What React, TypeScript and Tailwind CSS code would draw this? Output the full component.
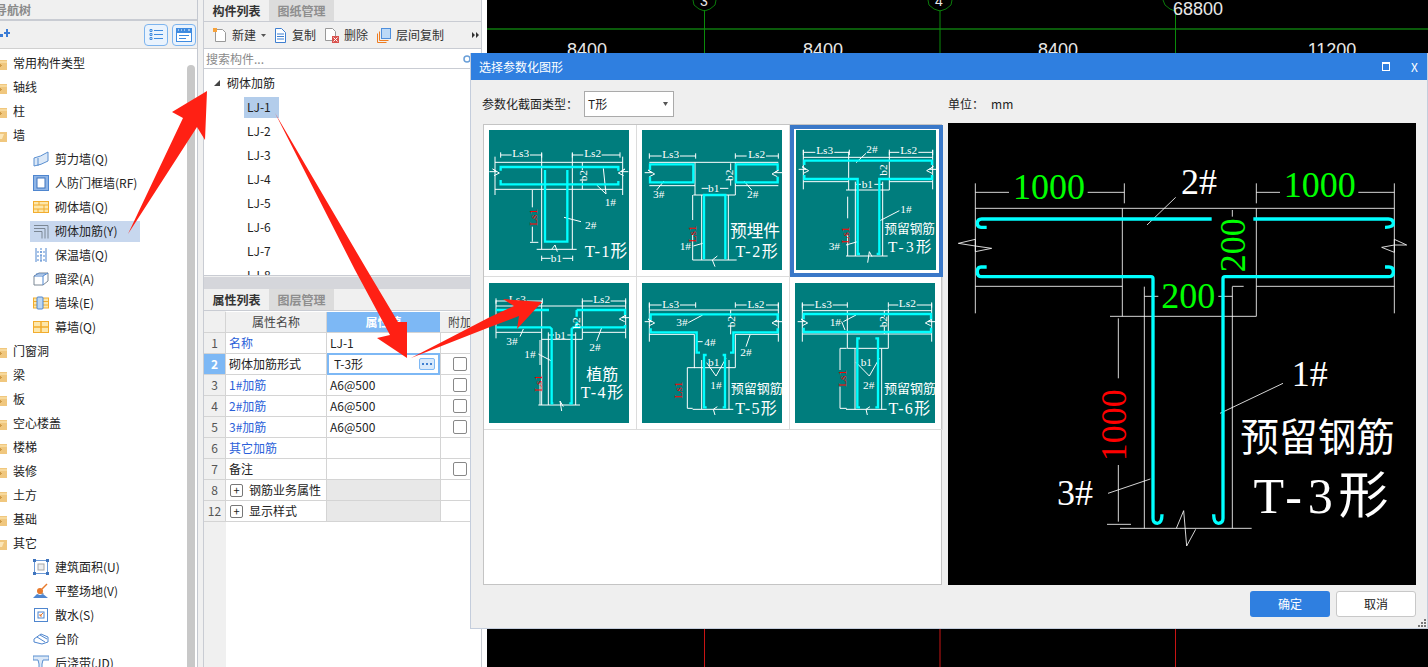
import type { ReactNode } from 'react'

const cad = { fontFamily: '"Liberation Serif", "Noto Sans CJK SC", serif' }

type Label = { t: string; x: number; y: number; s?: number; w?: number; rot?: boolean; red?: boolean; green?: boolean }

const Drawing = ({ vb, white, cyan, labels, thin = 3, bar = 7 }: { vb: string; white: string; cyan: string; labels: Label[]; thin?: number; bar?: number }) => (
  <svg viewBox={vb} className="w-full h-full block">
    <path d={white} fill="none" stroke="#fff" strokeWidth={thin} />
    <path d={cyan} fill="none" stroke="#00ffff" strokeWidth={bar} />
    {labels.map(l => (
      <text
        key={l.t + l.x}
        x={l.rot ? 0 : l.x}
        y={l.rot ? 0 : l.y}
        transform={l.rot ? `translate(${l.x} ${l.y}) rotate(-90)` : undefined}
        fontSize={l.s ?? 34}
        textAnchor="middle"
        textLength={l.w}
        lengthAdjust={l.w ? 'spacing' : undefined}
        fill={l.red ? '#ff0000' : l.green ? '#00ff00' : '#ffffff'}
        style={cad}
      >
        {l.t}
      </text>
    ))}
  </svg>
)

const breakL = (x: number, y: number) => `M${x} ${y}h22l-12 -8l20 12l-16 8 `
const breakR = (x: number, y: number) => `M${x} ${y}h-22l12 -8l-20 12l16 8 `

const thumbs = [
  {
    vb: '27 30 420 420',
    white: `M62 105H95M150 105H185M62 97V113M185 97V113M277 105H310M365 105H420M277 97V113M420 97V113M45 127H428M45 208H428M45 110V225M428 110V225M185 100V388M277 100V388M170 388H290M157 210V262M157 320V365M150 367H175M185 415H212M248 415H278M185 407V423M278 407V423M252 292L303 305M350 195L378 222M370 145L378 222M307 127V150M307 182V208M215 388L225 375L232 395${breakL(28, 155)}${breakR(445, 155)}`,
    cyan: 'M62 152V141H415V152M62 180V193H415V183M195 150V365H262V150',
    labels: [
      { t: 'Ls3', x: 122, y: 110 },
      { t: 'Ls2', x: 338, y: 110 },
      { t: 'b2', x: 320, y: 167, rot: true },
      { t: 'Ls1', x: 172, y: 292, rot: true, red: true },
      { t: 'b1', x: 229, y: 426 },
      { t: '1#', x: 391, y: 257 },
      { t: '2#', x: 332, y: 326 },
      { t: 'T-1形', x: 378, y: 412, s: 50, w: 127 },
    ],
  },
  {
    vb: '486 30 420 420',
    white: `M508 108H545M600 108H647M508 100V116M647 100V116M766 108H800M858 108H895M766 100V116M895 100V116M508 127H895M508 197H645M766 197H895M645 127V225M766 127V225M640 225H766M665 225V420M745 225V420M638 420H770M665 205H685M720 205H745M638 225V300M638 345V420M552 183L530 210M792 183L815 210M640 378L668 370M752 130V150M752 180V197M705 440L697 420L712 408${breakL(494, 158)}${breakR(906, 158)}`,
    cyan: 'M510 150V133H640V187H510V170M893 150V133H768V187H893V170M672 418V225H736V418',
    labels: [
      { t: 'Ls3', x: 572, y: 113 },
      { t: 'Ls2', x: 830, y: 113 },
      { t: 'b2', x: 760, y: 166, rot: true },
      { t: 'b1', x: 701, y: 216 },
      { t: 'Ls1', x: 648, y: 342, rot: true, red: true },
      { t: '3#', x: 536, y: 233 },
      { t: '2#', x: 818, y: 233 },
      { t: '1#', x: 616, y: 390 },
      { t: '预埋件', x: 825, y: 352, s: 50 },
      { t: 'T-2形', x: 830, y: 412, s: 48, w: 127 },
    ],
  },
  {
    vb: '30 30 420 420',
    white: `M52 97H88M145 97H190M52 89V105M190 89V105M310 97H340M397 97H440M310 89V105M440 89V105M52 112H440M52 185H188M310 185H440M52 90V208M440 90V208M188 95V210M310 95V210M180 210H310M208 185V408M290 185V408M180 408H305M185 230V295M185 345V408M210 128L240 100M280 303L340 272M180 375L215 365M245 428L250 395L258 410M210 193H225M265 193H290${breakL(38, 148)}${breakR(452, 148)}`,
    cyan: 'M55 135V122H438V135M55 165V177H215V402H222M438 165V177H280V402H272',
    labels: [
      { t: 'Ls3', x: 116, y: 103 },
      { t: 'Ls2', x: 368, y: 103 },
      { t: '2#', x: 258, y: 98 },
      { t: 'b2', x: 302, y: 150, rot: true },
      { t: 'b1', x: 244, y: 205 },
      { t: 'Ls1', x: 190, y: 345, rot: true, red: true },
      { t: '1#', x: 360, y: 278 },
      { t: '3#', x: 145, y: 389 },
      { t: '预留钢筋', x: 371, y: 340, s: 38 },
      { t: 'T-3形', x: 371, y: 395, s: 46, w: 130 },
    ],
  },
  {
    vb: '27 24 420 420',
    white: `M48 78H85M140 78H187M48 70V86M187 70V86M307 78H338M392 78H437M307 70V86M437 70V86M48 93H437M48 172H185M307 172H437M48 76V190M437 76V190M185 78V390M307 78V193M185 193H307M205 172V390M287 172V390M175 390H300M180 195V270M180 325V390M175 237L215 258M130 162L120 185M365 158L350 198M245 408L240 378L250 395M205 180H222M262 180H287${breakR(448, 128)}`,
    cyan: 'M48 105H207M290 105H435V120M48 157H210L215 162V385H220M435 150V157H280L275 162V385H268M290 105V125M290 157V140',
    labels: [
      { t: 'Ls3', x: 112, y: 84 },
      { t: 'Ls2', x: 365, y: 84 },
      { t: 'b2', x: 300, y: 144, rot: true },
      { t: 'b1', x: 241, y: 191 },
      { t: '3#', x: 96, y: 209 },
      { t: '2#', x: 345, y: 229 },
      { t: '1#', x: 150, y: 248 },
      { t: 'Ls1', x: 187, y: 325, rot: true, red: true },
      { t: '植筋', x: 367, y: 315, s: 48 },
      { t: 'T-4形', x: 366, y: 368, s: 48, w: 127 },
    ],
  },
  {
    vb: '486 24 420 420',
    white: `M508 90H545M600 90H647M508 82V98M647 82V98M766 90H800M858 90H895M766 82V98M895 82V98M508 105H895M508 178H643M766 178H895M508 85V200M895 85V200M643 178V278M766 178V278M643 278H766M665 255V403M747 255V403M638 403H760M622 278H645M622 400H638M622 278V400M625 143L668 120M652 200H668M810 180L798 215M680 263L708 303L738 250M705 420L700 403L712 395M752 105V125M752 152V178${breakL(494, 140)}${breakR(906, 140)}`,
    cyan: 'M512 135V118H893V135M512 160V172H650V233H660M893 160V172H760V233H750M680 240H672V397H680M728 240H735V397H728',
    labels: [
      { t: 'Ls3', x: 572, y: 98 },
      { t: 'Ls2', x: 828, y: 98 },
      { t: '3#', x: 606, y: 152 },
      { t: 'b2', x: 764, y: 140, rot: true },
      { t: '4#', x: 690, y: 214 },
      { t: '2#', x: 798, y: 242 },
      { t: 'b1', x: 701, y: 273 },
      { t: '1#', x: 708, y: 341 },
      { t: 'Ls1', x: 605, y: 345, rot: true, red: true },
      { t: '预留钢筋', x: 830, y: 354, s: 39 },
      { t: 'T-5形', x: 828, y: 416, s: 48, w: 125 },
    ],
  },
  {
    vb: '945 24 420 420',
    white: `M967 90H1003M1058 90H1102M967 82V98M1102 82V98M1225 90H1255M1310 90H1355M1225 82V98M1355 82V98M967 107H1355M967 177H1355M967 85V200M1355 85V200M1102 107V220M1225 100V220M1102 220H1225M1125 220V403M1205 220V403M1098 403H1220M1080 220H1100M1080 400H1100M1080 220V285M1080 335V400M1090 140L1128 120M1085 140L1095 165M1128 262L1168 303L1198 250M1162 420L1158 403L1170 395M1213 125V107M1213 155V177${breakL(953, 140)}${breakR(1366, 140)}`,
    cyan: 'M971 133V117H1353V133M971 158V171H1353V158M1140 190H1132V397H1140M1186 190H1194V397H1186',
    labels: [
      { t: 'Ls3', x: 1030, y: 98 },
      { t: 'Ls2', x: 1282, y: 96 },
      { t: '1#', x: 1066, y: 152 },
      { t: 'b2', x: 1222, y: 140, rot: true },
      { t: 'b1', x: 1159, y: 273 },
      { t: '2#', x: 1166, y: 341 },
      { t: 'Ls1', x: 1097, y: 310, rot: true, red: true },
      { t: '预留钢筋', x: 1290, y: 354, s: 39 },
      { t: 'T-6形', x: 1288, y: 416, s: 48, w: 125 },
    ],
  },
]

const bigWhite = `M91 265H1348M91 190V580M1348 190V580M538 190V250M934 190V250M91 217H192M428 217H538M934 217H1005M1240 217H1348M91 499H532M934 499H1348M532 265V589M934 265V589M495 589H934M598 500V1225M862 500V1225M525 1225H920M598 529H640M820 529H862M606 315L692 232M825 880L1014 790M489 1120L616 1077M520 595V775M520 1035V1205M486 1213H558M862 499H896M862 270V290M694 1225L716 1172L725 1278L752 1228M40 370L91 358V395L140 385L91 378L40 370M1385 375L1348 358V397L1310 382L1348 375H1385`
const bigCyan = 'M125 322H108Q97 322 97 310Q97 297 110 297H800M925 297H1330Q1345 297 1345 310Q1345 322 1320 322M125 441H108Q97 441 97 455Q97 470 110 470H618Q624 470 624 476V1195Q624 1210 637 1210Q651 1210 651 1183M1320 441H1332Q1345 441 1345 455Q1345 470 1330 470H840Q834 470 834 476V1195Q834 1210 820 1210Q806 1210 806 1183'
const bigLabels: Label[] = [
  { t: '1000', x: 312, y: 238, s: 108, green: true },
  { t: '1000', x: 1124, y: 232, s: 108, green: true },
  { t: '200', x: 730, y: 565, s: 108, green: true },
  { t: '200', x: 900, y: 376, s: 108, green: true, rot: true },
  { t: '1000', x: 543, y: 916, s: 108, red: true, rot: true },
  { t: '2#', x: 762, y: 222, s: 108 },
  { t: '1#', x: 1094, y: 797, s: 108 },
  { t: '3#', x: 390, y: 1155, s: 108 },
  { t: '预留钢筋', x: 1118, y: 992, s: 116 },
  { t: 'T-3形', x: 1128, y: 1180, s: 150, w: 405 },
]

const Folder = ({ open }: { open?: boolean }) => (
  <svg width="14" height="13" viewBox="0 0 14 13" className="shrink-0 -ml-[7px]">
    <path d="M0 1h5l2 2h7v10H0z" fill="#f0c77e" />
    <path d={open ? 'M0 5h11l-2 5H0z' : 'M0 4h14v2H0z'} fill={open ? '#fbe6b8' : '#f7d99c'} />
    {!open && <path d="M6 7h2v1h1v1H8v1H6z" fill="#cf9a45" />}
  </svg>
)

const Ico = ({ children }: { children: ReactNode }) => (
  <svg width="16" height="16" viewBox="0 0 16 16" className="shrink-0">
    {children}
  </svg>
)

const icons: Record<string, ReactNode> = {
  shear: <Ico><path d="M1 7q6-1 14-6v9q-7 4-14 5z" fill="#dbe8f7" stroke="#5a8fd0" /><path d="M5 7v8" stroke="#5a8fd0" /></Ico>,
  rf: <Ico><rect x="0.5" y="0.5" width="15" height="15" fill="#8fb5e6" stroke="#4f86cf" /><rect x="4" y="3" width="8" height="10" fill="#fff" stroke="#3f74bd" /></Ico>,
  brick: <Ico><rect x="0.5" y="2.5" width="15" height="11" fill="#fde7ab" stroke="#f2ad2e" /><path d="M1 6h14M1 10h14M6 3v3M11 6v4M5 10v3M11 10v3" stroke="#f2ad2e" /></Ico>,
  rebar: <Ico><path d="M1 2.5h14v13M1 5.5h11v10M1 8.5h8v7" fill="none" stroke="#7b8794" /></Ico>,
  insul: <Ico><path d="M3 1v14M13 1v14" stroke="#4f86cf" /><path d="M8 1v14M4 5h8M4 9h8M4 13h8" stroke="#4f86cf" strokeDasharray="2 1" /></Ico>,
  beam: <Ico><path d="M1 5l5-3h9v8l-5 4H1z" fill="#fff" stroke="#7b8794" /><path d="M1 5h9v9M10 5l5-3" fill="none" stroke="#4f86cf" /><path d="M3 3h10" stroke="#4f86cf" /></Ico>,
  pier: <Ico><rect x="0.5" y="3" width="15" height="10" fill="#fde7ab" stroke="#f2ad2e" /><path d="M1 6.5h14M1 10h14" stroke="#f2ad2e" /><rect x="4" y="2" width="6" height="12" rx="1" fill="#bcd6f2" stroke="#4f86cf" /></Ico>,
  curtain: <Ico><rect x="0.5" y="2.5" width="15" height="11" fill="#fde7ab" stroke="#f2ad2e" /><path d="M8 3v10M1 8h14" stroke="#f2ad2e" strokeWidth="1.5" /></Ico>,
  area: <Ico><rect x="1.5" y="1.5" width="13" height="13" fill="#fff" stroke="#6d9ad6" /><rect x="5" y="5" width="6" height="6" fill="#eee" stroke="#a8a8a8" /><path d="M0 0h3v3H0zM13 0h3v3h-3zM0 13h3v3H0zM13 13h3v3h-3z" fill="#3f74bd" /></Ico>,
  land: <Ico><path d="M0 15l4-4 3 1 3-1 5 4z" fill="#4f86cf" /><path d="M5 11l3-3 3 3z" fill="#9a9a9a" /><path d="M9 6l5-5" stroke="#e87a2c" strokeWidth="1.5" /><circle cx="7" cy="8" r="3" fill="#e87a2c" /></Ico>,
  apron: <Ico><rect x="1.5" y="1.5" width="13" height="13" fill="#fff" stroke="#4f86cf" /><rect x="5" y="5" width="6" height="6" fill="#fff" stroke="#4f86cf" /><path d="M10 6L7 9M7 7v2h2" stroke="#e87a2c" fill="none" /></Ico>,
  step: <Ico><path d="M1 8l7-5 7 3v5l-6 2-8-2z" fill="#fff" stroke="#4f86cf" /><path d="M4 6l8 5M7 4l7 4" stroke="#4f86cf" /></Ico>,
  post: <Ico><path d="M0 1h16v4H10l-1 4v7H6V9L5 5H0z" fill="#dbe8f7" stroke="#5a8fd0" /></Ico>,
}

type NavRow = { label: string; icon?: string; open?: boolean; active?: boolean }

const navRows: NavRow[] = [
  { label: '常用构件类型' },
  { label: '轴线' },
  { label: '柱' },
  { label: '墙', open: true },
  { label: '剪力墙(Q)', icon: 'shear' },
  { label: '人防门框墙(RF)', icon: 'rf' },
  { label: '砌体墙(Q)', icon: 'brick' },
  { label: '砌体加筋(Y)', icon: 'rebar', active: true },
  { label: '保温墙(Q)', icon: 'insul' },
  { label: '暗梁(A)', icon: 'beam' },
  { label: '墙垛(E)', icon: 'pier' },
  { label: '幕墙(Q)', icon: 'curtain' },
  { label: '门窗洞' },
  { label: '梁' },
  { label: '板' },
  { label: '空心楼盖' },
  { label: '楼梯' },
  { label: '装修' },
  { label: '土方' },
  { label: '基础' },
  { label: '其它', open: true },
  { label: '建筑面积(U)', icon: 'area' },
  { label: '平整场地(V)', icon: 'land' },
  { label: '散水(S)', icon: 'apron' },
  { label: '台阶', icon: 'step' },
  { label: '后浇带(JD)', icon: 'post' },
]

const NavTree = () => (
  <div className="w-[198px] h-full shrink-0 flex flex-col bg-white border-r border-[#c4c8d0] overflow-hidden">
    <div className="h-[21px] shrink-0 bg-[#f0f0f0] border-b-2 border-[#c9ccd3] text-[12px] leading-[19px] text-[#8a8a8a] font-bold -ml-[5px]">导航树</div>
    <div className="h-[28px] shrink-0 bg-[#f0f0f0] border-b border-[#d0d0d0] flex items-center justify-end gap-[4px] pr-[1px] relative">
      <svg width="10" height="9" viewBox="0 0 10 9" className="absolute left-0 top-[8px]" fill="#3a7bd5">
        <path d="M6 0h2v3h2v2H8v3H6V5H4V3h2zM0 5h3v3H0z" />
      </svg>
      <span className="w-[24px] h-[22px] border border-[#7db4ee] rounded-[4px] bg-[#eaf3fd] flex items-center justify-center">
        <svg width="14" height="13" viewBox="0 0 14 13" fill="none" stroke="#3f8be0"><path d="M1 1.5h2v2H1zM1 5.5h2v2H1zM1 9.5h2v2H1zM5 2.5h9M5 6.5h9M5 10.5h9" /></svg>
      </span>
      <span className="w-[24px] h-[22px] border border-[#7db4ee] rounded-[4px] bg-[#eaf3fd] flex items-center justify-center">
        <svg width="16" height="14" viewBox="0 0 16 14"><rect x="0.5" y="0.5" width="15" height="13" fill="#fff" stroke="#3f8be0" /><rect x="0" y="0" width="16" height="5" fill="#3f8be0" /><path d="M2 2h1M5 2h1M8 2h1M12 2h2" stroke="#fff" /><path d="M3 7.5h10M3 10.5h7" stroke="#3f8be0" /></svg>
      </span>
    </div>
    <div className="flex-1 flex min-h-0">
      <div className="w-[187px] pt-[2px] overflow-hidden">
        {navRows.map(r => (
          <div key={r.label} className="h-6 flex items-center text-[12px] text-[#222]">
            {r.icon ? (
              <div className={`ml-[30px] w-[110px] h-[21px] flex items-center gap-[6px] pl-[3px] whitespace-nowrap ${r.active ? 'bg-[#c7d7ee]' : ''}`}>
                {icons[r.icon]}
                <span>{r.label}</span>
              </div>
            ) : (
              <>
                <Folder open={r.open} />
                <span className="ml-[6px]">{r.label}</span>
              </>
            )}
          </div>
        ))}
      </div>
      <div className="w-[8px] mt-[16px] bg-[#c8c8c8] rounded-t-[4px]" />
    </div>
  </div>
)

const Tabs = ({ a, b }: { a: string; b: string }) => (
  <div className="h-[22px] shrink-0 flex items-end bg-[#f0f0f0] border-b border-[#c9ccd3] text-[12px] font-bold">
    <div className="w-[65px] h-full flex items-center justify-center text-[#333]">{a}</div>
    <div className="w-[65px] h-full flex items-center justify-center bg-[#dcdcdc] text-[#8e8e8e]">{b}</div>
  </div>
)

const ToolBtn = ({ icon, label, w }: { icon: ReactNode; label: string; w: string }) => (
  <div className={`flex items-center gap-[5px] shrink-0 ${w}`}>
    {icon}
    <span>{label}</span>
  </div>
)

const Toolbar = () => (
  <div className="h-[27px] shrink-0 bg-[#f0f0f0] border-b border-[#c9ccd3] flex items-center pl-[9px] text-[12px] text-[#333] relative">
    <ToolBtn
      w="w-[61px]"
      label="新建"
      icon={<svg width="14" height="15" viewBox="0 0 14 15"><path d="M2.5 1.5h7l3 3v9h-10z" fill="#fff" stroke="#999" /><path d="M0 0h4v4H0z" fill="#f7a23b" /></svg>}
    />
    <ToolBtn
      w="w-[51px]"
      label="复制"
      icon={<svg width="13" height="15" viewBox="0 0 13 15"><path d="M1.5.5h6l4 4v10h-10z" fill="#fff" stroke="#3f7fd0" /><path d="M3 6h7M3 8.5h7M3 11h7" stroke="#3f7fd0" /></svg>}
    />
    <ToolBtn
      w="w-[52px]"
      label="删除"
      icon={<svg width="14" height="15" viewBox="0 0 14 15"><path d="M.5.5h7l3 3v9H.5z" fill="#fff" stroke="#999" /><rect x="7" y="8" width="7" height="7" fill="#d9534f" /><path d="M8.5 9.5l4 4M12.5 9.5l-4 4" stroke="#fff" /></svg>}
    />
    <ToolBtn
      w="w-[80px]"
      label="层间复制"
      icon={<svg width="14" height="15" viewBox="0 0 14 15"><path d="M.5 5.5v9h9" fill="none" stroke="#ee7d22" /><path d="M2.5 3.5v9h9" fill="none" stroke="#ee7d22" /><rect x="4.5" y=".5" width="9" height="10" fill="#bcd9f7" stroke="#4f8fdc" /></svg>}
    />
    <svg width="5" height="3" viewBox="0 0 5 3" className="absolute left-[57px] top-[12px]" fill="#555"><path d="M0 0h5L2.5 3z" /></svg>
    <svg width="7" height="6" viewBox="0 0 7 6" className="absolute left-[268px] top-[10px]" fill="#333"><path d="M0 0l3 3-3 3zM4 0l3 3-3 3z" /></svg>
  </div>
)

type PropRow = { n: string; name: string; value?: string; blue?: boolean; check?: boolean; group?: boolean; sel?: boolean }

const propRows: PropRow[] = [
  { n: '1', name: '名称', value: 'LJ-1', blue: true },
  { n: '2', name: '砌体加筋形式', value: 'T-3形', check: true, sel: true },
  { n: '3', name: '1#加筋', value: 'A6@500', blue: true, check: true },
  { n: '4', name: '2#加筋', value: 'A6@500', blue: true, check: true },
  { n: '5', name: '3#加筋', value: 'A6@500', blue: true, check: true },
  { n: '6', name: '其它加筋', blue: true },
  { n: '7', name: '备注', check: true },
  { n: '8', name: '钢筋业务属性', group: true },
  { n: '12', name: '显示样式', group: true },
]

const PropTable = () => (
  <div className="flex-1 min-h-0 bg-white relative text-[12px] text-[#222]">
    <div className="absolute left-0 top-0 bottom-0 w-[22px] bg-[#f0f0f0]" />
    <div className="relative mt-[1px]">
      <div className="h-[21px] flex border-b border-[#d4d4d4] text-[#444]">
        <div className="w-[22px] shrink-0 border-r border-[#d4d4d4] bg-[#f0f0f0]" />
        <div className="w-[101px] shrink-0 border-r border-[#d4d4d4] bg-[#f0f0f0] flex items-center justify-center">属性名称</div>
        <div className="w-[113px] shrink-0 bg-[#7db8f5] text-white font-bold flex items-center justify-center">属性值</div>
        <div className="flex-1 bg-[#f0f0f0] flex items-center pl-[8px] whitespace-nowrap overflow-hidden">附加</div>
      </div>
      {propRows.map(r => (
        <div key={r.n} className="h-[21px] flex border-b border-[#d4d4d4]">
          <div className={`w-[22px] shrink-0 border-r border-[#d4d4d4] flex items-center justify-center ${r.sel ? 'bg-[#7db8f5] text-white font-bold' : 'bg-[#f0f0f0] text-[#555]'}`}>{r.n}</div>
          <div className={`w-[101px] shrink-0 border-r border-[#d4d4d4] flex items-center whitespace-nowrap pl-[3px] ${r.blue ? 'text-[#2b5fd9]' : ''}`}>
            {r.group && (
              <span className="w-[13px] h-[13px] border border-[#777] rounded-[2px] mr-[6px] ml-[1px] flex items-center justify-center text-[11px] leading-none">+</span>
            )}
            {r.name}
          </div>
          {r.sel ? (
            <div className="w-[113px] shrink-0 border-2 border-[#7db8f5] -mt-[1px] h-[22px] flex items-center justify-between pl-[5px] pr-[3px] bg-white">
              {r.value}
              <span className="w-[16px] h-[12px] bg-[#d8e9fb] border border-[#7db8f5] rounded-[2px] flex items-center justify-center">
                <svg width="10" height="2" viewBox="0 0 10 2" fill="#3f7fd0"><path d="M0 0h2v2H0zM4 0h2v2H4zM8 0h2v2H8z" /></svg>
              </span>
            </div>
          ) : (
            <div className={`w-[113px] shrink-0 flex items-center pl-[3px] ${r.group ? 'bg-[#e8e8e8]' : ''}`}>{r.value}</div>
          )}
          <div className="flex-1 border-l border-[#d4d4d4] pl-[12px] flex items-center">
            {r.check && <span className="w-[14px] h-[14px] border border-[#888] rounded-[2px] bg-white" />}
          </div>
        </div>
      ))}
    </div>
  </div>
)

const MidPanel = () => (
  <div className="w-[279px] h-full shrink-0 ml-[5px] flex flex-col bg-[#f0f0f0] border-x border-[#c9ccd3] overflow-hidden">
    <Tabs a="构件列表" b="图纸管理" />
    <Toolbar />
    <div className="h-[20px] shrink-0 bg-white border-b border-[#c9ccd3] text-[12px] text-[#8a8a8a] pl-[2px] pr-[10px] leading-[19px] flex justify-between items-center">
      搜索构件...
      <svg width="8" height="8" viewBox="0 0 8 8" fill="none" stroke="#6a9fd8" strokeWidth="1.5"><circle cx="4" cy="4" r="3" /></svg>
    </div>
    <div className="h-[207px] shrink-0 bg-white border-b border-[#c9ccd3] overflow-hidden text-[12px] text-[#222] pt-[2px]">
      <div className="h-6 flex items-center pl-[10px]">
        <span className="w-0 h-0 border-l-[6px] border-l-transparent border-b-[6px] border-b-[#444] mr-[7px]" />
        砌体加筋
      </div>
      {['LJ-1', 'LJ-2', 'LJ-3', 'LJ-4', 'LJ-5', 'LJ-6', 'LJ-7', 'LJ-8'].map((l, i) => (
        <div key={l} className="h-6 flex items-center pl-[40px]">
          <span className={`h-[21px] flex items-center px-[3px] w-[35px] ${i === 0 ? 'bg-[#b3cdeb]' : ''}`}>{l}</span>
        </div>
      ))}
    </div>
    <div className="h-[12px] shrink-0 bg-[#d5d6db] mt-[1px]" />
    <Tabs a="属性列表" b="图层管理" />
    <PropTable />
  </div>
)

const Canvas = () => (
  <div className="flex-1 h-full bg-black border-l-[5px] border-white">
    <svg width="941" height="667" viewBox="487 0 941 667" className="block">
      <path d="M487 29H1428" stroke="#0a5a0a" strokeWidth="2" />
      <path d="M704.5 10V53M940 10V53M1175.5 10V53" stroke="#0a8a0a" />
      <path d="M704.5 629V667M940 629V667M1175.5 629V667" stroke="#c81414" />
      <path d="M693 0l1 5 5 4 5.5 2 5.5-2 5-4 1-5M928 0l1 5 5 4 6 2 6-2 5-4 1-5M1163 0l2 5 5 4 5 2" fill="none" stroke="#0a7a0a" />
      {[
        { t: '3', x: 704, y: 6, s: 14 },
        { t: '4', x: 939, y: 6, s: 14 },
        { t: '68800', x: 1198, y: 15, s: 18 },
        { t: '8400', x: 587, y: 56, s: 18 },
        { t: '8400', x: 823, y: 56, s: 18 },
        { t: '8400', x: 1058, y: 56, s: 18 },
        { t: '11200', x: 1332, y: 56, s: 18 },
      ].map(l => (
        <text key={l.t + l.x} x={l.x} y={l.y} fontSize={l.s} textAnchor="middle" fill="#e8e8e8" style={{ fontFamily: '"Liberation Sans", sans-serif' }}>
          {l.t}
        </text>
      ))}
    </svg>
  </div>
)

const Dialog = () => (
  <div className="absolute left-[470px] top-[53px] w-[958px] h-[576px] bg-[#efefef] border border-t-0 border-[#c4cddc] flex flex-col text-[12px] text-[#222]">
    <div className="h-[27px] shrink-0 bg-[#2f7fe0] text-white flex items-center pl-[8px] pr-[9px] justify-between">
      选择参数化图形
      <div className="flex items-center gap-[21px]">
        <span className="w-[8px] h-[9px] border border-white border-t-2" />
        <span className="leading-none">X</span>
      </div>
    </div>
    <div className="h-[43px] shrink-0 flex items-center pt-[5px]">
      <span className="ml-[11px] w-[102px] whitespace-nowrap">参数化截面类型：</span>
      <div className="w-[90px] h-[26px] bg-white border border-[#aaa] flex items-center justify-between pl-[3px] pr-[5px]">
        T形
        <svg width="5" height="4" viewBox="0 0 5 4" fill="#555"><path d="M0 0h5L2.5 4z" /></svg>
      </div>
      <span className="ml-[274px]">单位：</span>
      <span className="ml-[7px]">mm</span>
    </div>
    <div className="flex ml-[12px] gap-[6px]">
      <div className="w-[459px] h-[461px] mt-[1px] bg-white border border-[#c4c4c4]">
        <div className="grid grid-cols-[153px_153px_153px]">
          {thumbs.map((t, i) => (
            <div
              key={t.vb}
              className={`${i < 3 ? 'h-[152px]' : 'h-[153px]'} ${i === 2 ? 'border-[4px] border-[#3a78c8] pl-[2px] pt-[1px]' : `border-r border-b border-[#dcdcdc] pl-[5px] ${i < 3 ? 'pt-[5px]' : 'pt-[6px]'}`}`}
            >
              <div className="w-[140px] h-[140px] bg-[#007d7d] overflow-hidden">
                <Drawing vb={t.vb} white={t.white} cyan={t.cyan} labels={t.labels} />
              </div>
            </div>
          ))}
        </div>
      </div>
      <div className="w-[468px] h-[462px] bg-black">
        <Drawing vb="9 9 1404 1386" white={bigWhite} cyan={bigCyan} labels={bigLabels} thin={2.5} bar={10} />
      </div>
    </div>
    <div className="flex-1 flex justify-end items-start gap-[6px] pr-[11px] pt-[6px]">
      <button className="w-[80px] h-[26px] rounded-[3px] bg-[#2f7fe0] text-white">确定</button>
      <button className="w-[80px] h-[26px] rounded-[3px] bg-white border border-[#c8c8c8]">取消</button>
    </div>
    <svg width="8" height="8" viewBox="0 0 8 8" className="absolute right-[1px] bottom-[1px]" fill="#777">
      <path d="M6 0h2v2H6zM3 3h2v2H3zM6 3h2v2H6zM0 6h2v2H0zM3 6h2v2H3zM6 6h2v2H6z" />
    </svg>
  </div>
)

const Arrows = () => (
  <svg width="1428" height="667" viewBox="0 0 1428 667" className="absolute left-0 top-0 pointer-events-none">
    <g fill="#ff2014">
      <path d="M128 234L183 118L172 112L207 91L205 140L197 127Z" />
      <path d="M275 113L367 270L398 322L407 322V358L377 338L390 335L355 270Z" />
      <path d="M411 358L490 317L514 306L503 299L542 302L517 329L519 316L490 327Z" />
    </g>
  </svg>
)

const App = () => (
  <div
    className="relative w-[1428px] h-[667px] overflow-hidden flex bg-[#f0f0f0]"
    style={{ fontFamily: '"Noto Sans CJK SC", "Liberation Sans", sans-serif' }}
  >
    <NavTree />
    <MidPanel />
    <Canvas />
    <Dialog />
    <Arrows />
  </div>
)

export default App
